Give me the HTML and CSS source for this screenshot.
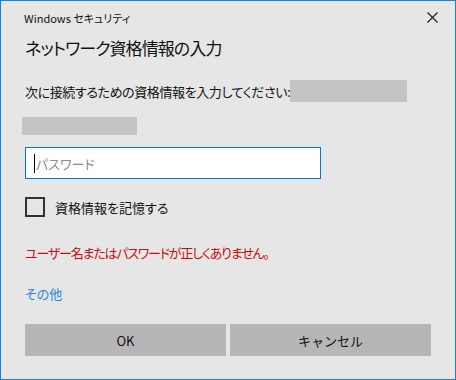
FILE: index.html
```html
<!DOCTYPE html>
<html lang="ja">

<head>
    <meta charset="UTF-8">
    <meta name="viewport" content="width=device-width, initial-scale=1.0">
    <title>Windows セキュリティ</title>
    <link rel="stylesheet" href="styles.css">
</head>

<body>
    <div class="window">
        <div class="titlebar">
            <span class="app-name">Windows セキュリティ</span>
            <span class="close">
                <svg width="11" height="11" viewBox="0 0 11 11">
                    <path d="M0.5 0.5 L10.5 10.5 M10.5 0.5 L0.5 10.5" stroke="#1a1a1a" stroke-width="1.1" fill="none" />
                </svg>
            </span>
        </div>
        <div class="content">
            <h1 class="heading">ネットワーク資格情報の入力</h1>
            <div class="prompt">
                <span>次に接続するための資格情報を入力してください:</span>
                <span class="redact redact-host"></span>
            </div>
            <div class="redact redact-user"></div>
            <div class="field">
                <span class="caret"></span>
                <span class="placeholder">パスワード</span>
            </div>
            <label class="remember">
                <span class="checkbox"></span>
                <span>資格情報を記憶する</span>
            </label>
            <p class="error">ユーザー名またはパスワードが正しくありません。</p>
            <a class="more" href="#">その他</a>
            <div class="buttons">
                <button class="btn">OK</button>
                <button class="btn">キャンセル</button>
            </div>
        </div>
    </div>
</body>

</html>
```

FILE: styles.css
```css
* {
    margin: 0;
    padding: 0;
    box-sizing: border-box;
}

body {
    font-family: "Noto Sans CJK JP", "Noto Sans", sans-serif;
    font-feature-settings: "palt";
    color: #111;
    background: #e6e6e6;
}

.window {
    width: 456px;
    height: 380px;
    border: 1px solid #1883d7;
    background: #e6e6e6;
}

.titlebar {
    height: 33px;
    display: flex;
    align-items: center;
    justify-content: space-between;
    padding: 0 17px 0 23px;
    font-size: 11px;
}

.close {
    display: flex;
}

.content {
    padding: 0 24px;
}

.heading {
    font-size: 17px;
    font-weight: normal;
    line-height: 28px;
    letter-spacing: -0.9px;
}

.prompt {
    margin-top: 18px;
    height: 22px;
    display: flex;
    align-items: center;
    font-size: 13px;
    letter-spacing: -0.4px;
    white-space: nowrap;
}

.redact {
    background: #c4c4c4;
    flex-shrink: 0;
}

.redact-host {
    width: 117px;
    height: 22px;
}

.redact-user {
    width: 115px;
    height: 18px;
    margin: 15px 0 0 -3px;
}

.field {
    margin-top: 12px;
    width: 296px;
    height: 32px;
    border: 1px solid #0078d7;
    background: #fff;
    display: flex;
    align-items: center;
    padding-left: 8px;
    font-size: 13px;
}

.caret {
    width: 1px;
    height: 19px;
    background: #000;
}

.placeholder {
    color: #8a8a8a;
    margin-left: 1px;
}

.remember {
    margin-top: 18px;
    height: 20px;
    display: flex;
    align-items: center;
    font-size: 13px;
}

.checkbox {
    width: 20px;
    height: 20px;
    border: 2px solid #333;
    margin-right: 10px;
}

.error {
    margin-top: 26px;
    line-height: 20px;
    font-size: 13px;
    letter-spacing: -1.2px;
    color: #c80f0f;
}

.more {
    display: block;
    margin-top: 21px;
    line-height: 20px;
    font-size: 13px;
    color: #2a86d6;
    text-decoration: none;
    width: max-content;
}

.buttons {
    margin-top: 20px;
    display: flex;
    gap: 4px;
}

.btn {
    width: 201px;
    height: 32px;
    border: none;
    background: #b6b6b6;
    font-family: inherit;
    font-size: 13px;
    color: #111;
}
```
